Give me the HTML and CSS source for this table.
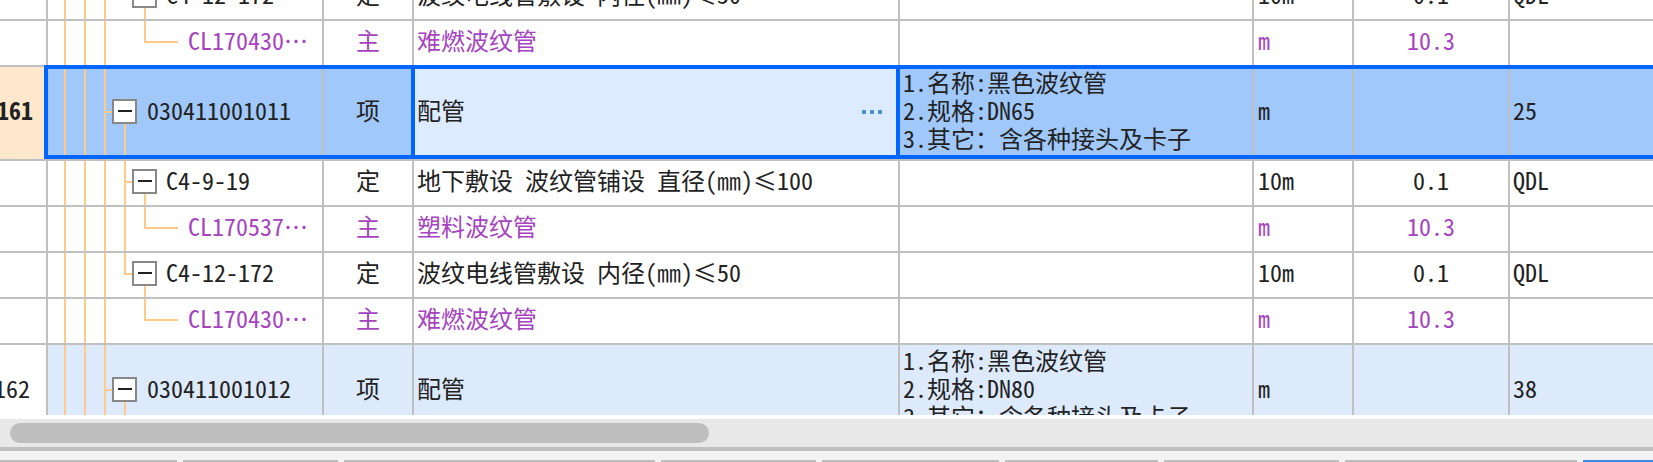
FILE: index.html
```html
<!DOCTYPE html>
<html lang="zh-CN">
<head>
<meta charset="utf-8">
<title>清单</title>
<link rel="stylesheet" href="styles.css">
</head>
<body>
<div class="sheet">
  <div class="rows">
    <div class="row">
      <div class="c h"></div>
      <div class="c code tr-last"><span class="box down2"></span><span>C4-12-172</span></div>
      <div class="c type">定</div>
      <div class="c name">波纹电线管敷设 内径(㎜)≤50</div>
      <div class="c desc"></div>
      <div class="c unit">10m</div>
      <div class="c qty">0.1</div>
      <div class="c amt">QDL</div>
    </div>
    <div class="row main">
      <div class="c h"></div>
      <div class="c code tr-leaf">CL170430…</div>
      <div class="c type">主</div>
      <div class="c name">难燃波纹管</div>
      <div class="c desc"></div>
      <div class="c unit">m</div>
      <div class="c qty">10.3</div>
      <div class="c amt"></div>
    </div>
    <div class="row tall sel">
      <div class="c h">161</div>
      <div class="c code tr-item"><span class="box lvl1 down1"></span><span>030411001011</span></div>
      <div class="c type">项</div>
      <div class="c name cur"><span>配管</span><span class="more"><i></i><i></i><i></i></span></div>
      <div class="c desc"><div class="lines"><div>1.名称:黑色波纹管</div><div>2.规格:DN65</div><div>3.其它：含各种接头及卡子</div></div></div>
      <div class="c unit">m</div>
      <div class="c qty"></div>
      <div class="c amt">25</div>
    </div>
    <div class="row">
      <div class="c h"></div>
      <div class="c code tr-mid"><span class="box down2"></span><span>C4-9-19</span></div>
      <div class="c type">定</div>
      <div class="c name">地下敷设 波纹管铺设 直径(㎜)≤100</div>
      <div class="c desc"></div>
      <div class="c unit">10m</div>
      <div class="c qty">0.1</div>
      <div class="c amt">QDL</div>
    </div>
    <div class="row main">
      <div class="c h"></div>
      <div class="c code tr-leaf-mid">CL170537…</div>
      <div class="c type">主</div>
      <div class="c name">塑料波纹管</div>
      <div class="c desc"></div>
      <div class="c unit">m</div>
      <div class="c qty">10.3</div>
      <div class="c amt"></div>
    </div>
    <div class="row">
      <div class="c h"></div>
      <div class="c code tr-last"><span class="box down2"></span><span>C4-12-172</span></div>
      <div class="c type">定</div>
      <div class="c name">波纹电线管敷设 内径(㎜)≤50</div>
      <div class="c desc"></div>
      <div class="c unit">10m</div>
      <div class="c qty">0.1</div>
      <div class="c amt">QDL</div>
    </div>
    <div class="row main">
      <div class="c h"></div>
      <div class="c code tr-leaf">CL170430…</div>
      <div class="c type">主</div>
      <div class="c name">难燃波纹管</div>
      <div class="c desc"></div>
      <div class="c unit">m</div>
      <div class="c qty">10.3</div>
      <div class="c amt"></div>
    </div>
    <div class="row tall hl">
      <div class="c h plain">162</div>
      <div class="c code tr-item"><span class="box lvl1 down1"></span><span>030411001012</span></div>
      <div class="c type">项</div>
      <div class="c name">配管</div>
      <div class="c desc"><div class="lines"><div>1.名称:黑色波纹管</div><div>2.规格:DN80</div><div>3.其它：含各种接头及卡子</div></div></div>
      <div class="c unit">m</div>
      <div class="c qty"></div>
      <div class="c amt">38</div>
    </div>
  </div>
</div>
<div class="hscroll"><div class="thumb"></div></div>
<div class="divider"></div>
<div class="tabs">
  <span class="seg w1"></span><span class="seg w2"></span><span class="seg w3"></span><span class="seg w4"></span><span class="seg w5"></span><span class="seg w6"></span><span class="seg w7"></span><span class="seg w8"></span><span class="seg blue"></span>
</div>
</body>
</html>
```
FILE: styles.css
```css
:root {
  --grid: #c0c0c0;
  --tl: #ffc987;
  --blue: #0066ff;
  --purple: #a644bf;
}
html, body {
  margin: 0;
  padding: 0;
}
body {
  width: 1653px;
  height: 462px;
  overflow: hidden;
  background: #fff;
  color: #222;
  font-family: "Noto Sans Mono CJK SC", "Noto Sans CJK SC", monospace;
  font-size: 24px;
}
.sheet {
  height: 415px;
  overflow: hidden;
}
.rows {
  margin-top: -25px;
}
.row {
  position: relative;
  display: grid;
  grid-template-columns: 48px 276px 90px 486px 354px 100px 156px 260px;
  height: 46px;
  border-bottom: 2px solid var(--grid);
  box-sizing: border-box;
}
.row.tall {
  height: 94px;
}
.c {
  display: flex;
  align-items: center;
  box-sizing: border-box;
  border-right: 2px solid var(--grid);
  padding-bottom: 7px;
  line-height: 28px;
  white-space: nowrap;
  overflow: hidden;
  min-width: 0;
}
.h {
  justify-content: flex-end;
  padding-right: 13px;
  font-weight: bold;
}
.h.plain {
  font-weight: normal;
  padding-right: 16px;
}
.type, .qty {
  justify-content: center;
}
.name { padding-left: 3px; }
.desc { padding-left: 3px; }
.unit { padding-left: 4px; }
.amt { padding-left: 3px; }
.main .c:not(.h) {
  color: var(--purple);
}

/* selected row */
.sel .c { background-color: #a0c8fa; }
.sel .c.h { background-color: #ffe8cc; }
.sel .c.cur { background-color: #dcebfd; }
.sel::after {
  content: "";
  position: absolute;
  left: 44px;
  right: -20px;
  top: -2px;
  bottom: 0;
  border: 4px solid var(--blue);
  pointer-events: none;
}
.cur {
  position: relative;
  overflow: visible;
}
.cur::after {
  content: "";
  position: absolute;
  left: -3px;
  right: -2px;
  top: -2px;
  bottom: 0;
  border: 4px solid var(--blue);
}
.more {
  display: flex;
  gap: 4px;
  margin-left: auto;
  margin-right: 16px;
  margin-top: 4px;
}
.more i {
  width: 4px;
  height: 4px;
  background: #4a8fd0;
}

/* highlighted row */
.hl .c { background-color: #ddeafc; }
.hl .c.h { background-color: #fff; }

.lines {
  display: flex;
  flex-direction: column;
}

/* tree */
.code {
  position: relative;
  background-repeat: no-repeat;
}
.tr-item, .tr-mid, .tr-last, .tr-leaf, .tr-leaf-mid {
  background-image:
    linear-gradient(var(--tl), var(--tl)),
    linear-gradient(var(--tl), var(--tl)),
    linear-gradient(var(--tl), var(--tl)),
    linear-gradient(var(--tl), var(--tl)),
    linear-gradient(var(--tl), var(--tl)),
    linear-gradient(var(--tl), var(--tl));
}
.tr-item {
  background-position: 16px 0, 36px 0, 56px 0, -10px 0, -10px 0, -10px 0;
  background-size: 2px 100%, 2px 100%, 2px 100%, 0 0, 0 0, 0 0;
  padding-left: 64px;
}
.tr-mid {
  background-position: 16px 0, 36px 0, 56px 0, 76px 0, -10px 0, -10px 0;
  background-size: 2px 100%, 2px 100%, 2px 100%, 2px 100%, 0 0, 0 0;
  padding-left: 84px;
}
.tr-last {
  background-position: 16px 0, 36px 0, 56px 0, 76px 0, -10px 0, -10px 0;
  background-size: 2px 100%, 2px 100%, 2px 100%, 2px 50%, 0 0, 0 0;
  padding-left: 84px;
}
.tr-leaf {
  background-position: 16px 0, 36px 0, 56px 0, -10px 0, 96px 0, 96px calc(50% - 1px);
  background-size: 2px 100%, 2px 100%, 2px 100%, 0 0, 2px 50%, 34px 2px;
  padding-left: 140px;
}
.tr-leaf-mid {
  background-position: 16px 0, 36px 0, 56px 0, 76px 0, 96px 0, 96px calc(50% - 1px);
  background-size: 2px 100%, 2px 100%, 2px 100%, 2px 100%, 2px 50%, 34px 2px;
  padding-left: 140px;
}
.box {
  position: relative;
  flex: none;
  width: 25px;
  height: 25px;
  box-sizing: border-box;
  border: 2px solid #888;
  background-color: #fff;
  background-image: linear-gradient(#222, #222);
  background-repeat: no-repeat;
  background-size: 14px 2px;
  background-position: 4px 9px;
  margin-right: 9px;
  margin-top: 4px;
}
.box::before {
  content: "";
  position: absolute;
  left: -8px;
  width: 6px;
  top: calc(50% - 1px);
  height: 2px;
  background: var(--tl);
}
.box::after {
  content: "";
  position: absolute;
  left: 10px;
  top: calc(100% + 2px);
  width: 2px;
  height: 200px;
  background: var(--tl);
}
.box.lvl1 {
  margin-right: 10px;
}

/* scroll bar & bottom */
.hscroll {
  height: 24px;
  border-top: 4px solid #fff;
  background: #e8e8e8;
  padding: 4px 0 0 10px;
}
.thumb {
  width: 699px;
  height: 20px;
  border-radius: 10px;
  background: #bebebe;
}
.divider {
  height: 4px;
  background: #c0c0c0;
}
.tabs {
  height: 11px;
  background: #f3f3f3;
  display: flex;
  align-items: flex-end;
  gap: 6px;
}
.seg {
  height: 2px;
  background: #bebebe;
  flex: none;
}
.w1 { width: 177px; }
.w2 { width: 155px; }
.w3 { width: 311px; }
.w4 { width: 155px; }
.w5 { width: 177px; }
.w6 { width: 153px; }
.w7 { width: 175px; }
.w8 { width: 232px; }
.seg.blue {
  flex: 1;
  background: #3d8be6;
}
```
